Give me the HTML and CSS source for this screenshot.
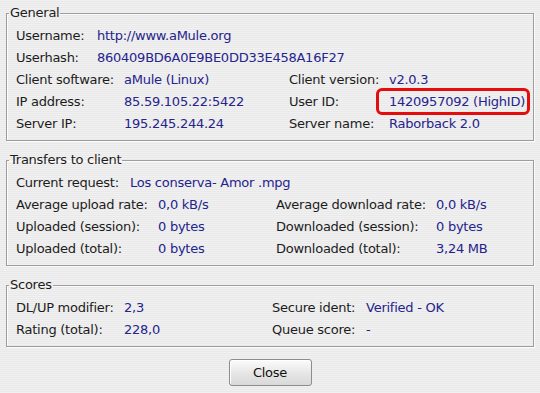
FILE: index.html
```html
<!DOCTYPE html>
<html lang="en">
<head>
  <meta charset="UTF-8">
  <title>Client details</title>
  <link rel="stylesheet" href="styles.css">
</head>
<body>
  <div class="dialog">
    <fieldset class="group">
      <legend>General</legend>
      <div class="grid general-top">
        <span class="label">Username:</span><span class="value">http://www.aMule.org</span>
        <span class="label">Userhash:</span><span class="value">860409BD6A0E9BE0DD33E458A16F27</span>
      </div>
      <div class="grid general">
        <span class="label">Client software:</span><span class="value">aMule (Linux)</span>
        <span class="label">Client version:</span><span class="value">v2.0.3</span>
        <span class="label">IP address:</span><span class="value">85.59.105.22:5422</span>
        <span class="label">User ID:</span><span class="value"><span class="highlight">1420957092 (HighID)</span></span>
        <span class="label">Server IP:</span><span class="value">195.245.244.24</span>
        <span class="label">Server name:</span><span class="value">Raborback 2.0</span>
      </div>
    </fieldset>

    <fieldset class="group">
      <legend>Transfers to client</legend>
      <div class="grid transfers-top">
        <span class="label">Current request:</span><span class="value">Los conserva- Amor .mpg</span>
      </div>
      <div class="grid transfers">
        <span class="label">Average upload rate:</span><span class="value">0,0 kB/s</span>
        <span class="label">Average download rate:</span><span class="value">0,0 kB/s</span>
        <span class="label">Uploaded (session):</span><span class="value">0 bytes</span>
        <span class="label">Downloaded (session):</span><span class="value">0 bytes</span>
        <span class="label">Uploaded (total):</span><span class="value">0 bytes</span>
        <span class="label">Downloaded (total):</span><span class="value">3,24 MB</span>
      </div>
    </fieldset>

    <fieldset class="group">
      <legend>Scores</legend>
      <div class="grid scores">
        <span class="label">DL/UP modifier:</span><span class="value">2,3</span>
        <span class="label">Secure ident:</span><span class="value">Verified - OK</span>
        <span class="label">Rating (total):</span><span class="value">228,0</span>
        <span class="label">Queue score:</span><span class="value">-</span>
      </div>
    </fieldset>

    <div class="buttons">
      <button class="btn">Close</button>
    </div>
  </div>
</body>
</html>
```

FILE: styles.css
```css
body {
  margin: 0;
  padding: 5px 6px 0;
  font-family: "DejaVu Sans", Verdana, sans-serif;
  font-size: 13px;
  letter-spacing: -0.25px;
  color: #1c1c1c;
  background: repeating-linear-gradient(to bottom, #f1f1f1 0, #f1f1f1 1px, #e9e9e9 1px, #e9e9e9 2px);
  height: 393px;
  box-sizing: border-box;
  overflow: hidden;
}
.group {
  margin: 11px 0 0;
  padding: 3px 9px 6px;
  border: 1px solid #9d9d9d;
  box-shadow: inset 1px 1px 0 #fbfbfb, 1px 1px 0 #fbfbfb;
  min-width: 0;
}
.group:first-child {
  margin-top: 0;
}
.group legend {
  margin-left: -7px;
  padding: 0 1px;
  line-height: 16px;
}
.grid {
  display: grid;
  grid-auto-rows: 22px;
  align-items: center;
  white-space: nowrap;
}
.general-top {
  grid-template-columns: 81px 1fr;
}
.general {
  grid-template-columns: 108px 165px 100px 1fr;
}
.transfers-top {
  grid-template-columns: 114px 1fr;
}
.transfers {
  grid-template-columns: 142px 118px 160px 1fr;
}
.scores {
  grid-template-columns: 108px 148px 94px 1fr;
}
.value {
  color: #25238c;
}
.highlight {
  position: relative;
}
.highlight::after {
  content: "";
  position: absolute;
  left: -13px;
  right: -5px;
  top: -6px;
  bottom: -6px;
  border: 3px solid #e30d0d;
  border-radius: 6px;
}
.buttons {
  display: flex;
  justify-content: center;
  margin-top: 12px;
}
.btn {
  width: 83px;
  height: 27px;
  font-family: inherit;
  font-size: 13px;
  letter-spacing: inherit;
  color: #111;
  background: linear-gradient(to bottom, #fbfbfb, #e4e4e4 60%, #d9d9d9);
  border: 1px solid #8c8c8c;
  border-radius: 3px;
  box-shadow: inset 1px 1px 0 #fff;
  padding: 0;
}
```
